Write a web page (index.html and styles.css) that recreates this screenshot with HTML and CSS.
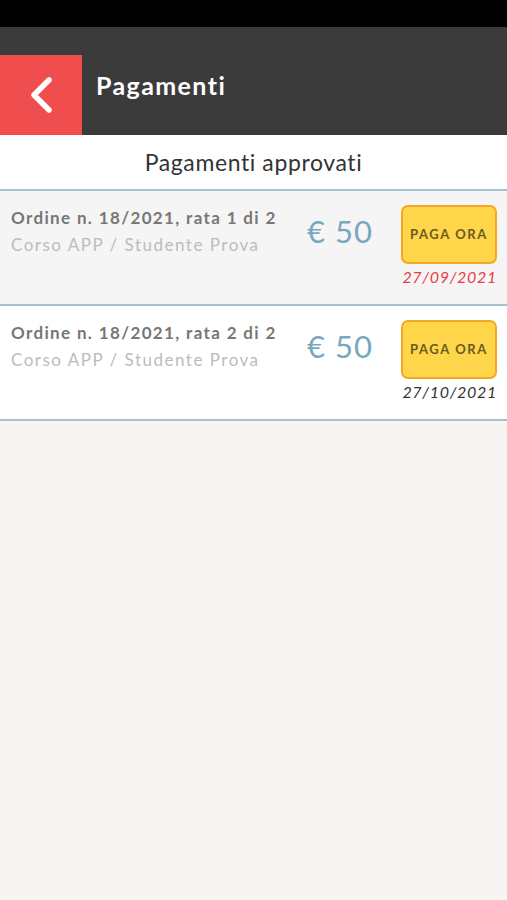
FILE: index.html
```html
<!DOCTYPE html>
<html lang="it">
<head>
  <meta charset="UTF-8" />
  <meta name="viewport" content="width=device-width, initial-scale=1.0"/>
  <title>Pagamenti</title>
  <link rel="stylesheet" href="styles.css">
</head>
<body>
  <div class="statusbar"></div>

  <header class="topbar">
    <div class="topbar-row">
      <a class="back" href="#">
        <svg width="26" height="38" viewBox="0 0 26 38"><path d="M21 4 L6 19 L21 34" fill="none" stroke="#fff" stroke-width="5.5" stroke-linecap="round" stroke-linejoin="round"/></svg>
      </a>
      <h1>Pagamenti</h1>
    </div>
  </header>

  <div class="subtitle">Pagamenti approvati</div>

  <ul class="payments">
    <li class="payment odd">
      <div class="info">
        <div class="order">Ordine n. 18/2021, rata 1 di 2</div>
        <div class="course">Corso APP / Studente Prova</div>
      </div>
      <div class="amount">€ 50</div>
      <div class="action">
        <button class="pay">PAGA ORA</button>
        <div class="due late">27/09/2021</div>
      </div>
    </li>
    <li class="payment">
      <div class="info">
        <div class="order">Ordine n. 18/2021, rata 2 di 2</div>
        <div class="course">Corso APP / Studente Prova</div>
      </div>
      <div class="amount">€ 50</div>
      <div class="action">
        <button class="pay">PAGA ORA</button>
        <div class="due">27/10/2021</div>
      </div>
    </li>
  </ul>
</body>
</html>
```

FILE: styles.css
```css
html,body{margin:0;padding:0;}
body{font-family:Lato,"Open Sans",sans-serif;background:#f6f5f2;min-height:900px;}

.statusbar{height:27px;background:#000;}

.topbar{background:#3b3b3b;height:108px;display:flex;flex-direction:column;justify-content:flex-end;}
.topbar-row{display:flex;align-items:center;height:80px;}
.back{display:flex;align-items:center;justify-content:center;width:82px;height:80px;background:#f04e4e;}
.topbar h1{margin:0 0 20px 14px;color:#fff;font-size:25px;font-weight:700;letter-spacing:1.4px;}

.subtitle{background:#fff;height:54px;line-height:54px;text-align:center;font-size:23px;color:#333;letter-spacing:0.6px;border-bottom:2px solid #a9c0d0;}

.payments{list-style:none;margin:0;padding:0;}
.payment{display:flex;align-items:flex-start;height:113px;background:#fff;border-bottom:2px solid #a9c0d0;}
.payment.odd{background:#f5f5f5;}

.info{flex:1;padding:16px 0 0 11px;}
.order{font-size:17px;font-weight:700;color:#777;letter-spacing:1.35px;}
.course{font-size:17px;color:#bcbcbc;letter-spacing:1.5px;margin-top:6px;}

.amount{font-size:31px;color:#77a8bf;letter-spacing:1px;padding-top:21px;margin-right:28px;}

.action{display:flex;flex-direction:column;align-items:flex-end;padding:14px 10px 0 0;}
.pay{width:96px;height:59px;background:#ffd54a;border:2px solid #f5a623;border-radius:7px;font-family:Lato,sans-serif;font-weight:700;font-size:13px;color:#6a5a1c;letter-spacing:1.6px;padding:0 0 2px;}
.due{font-size:16px;font-style:italic;color:#333;margin-top:3px;letter-spacing:0.7px;}
.due.late{color:#ea3c46;}
```
